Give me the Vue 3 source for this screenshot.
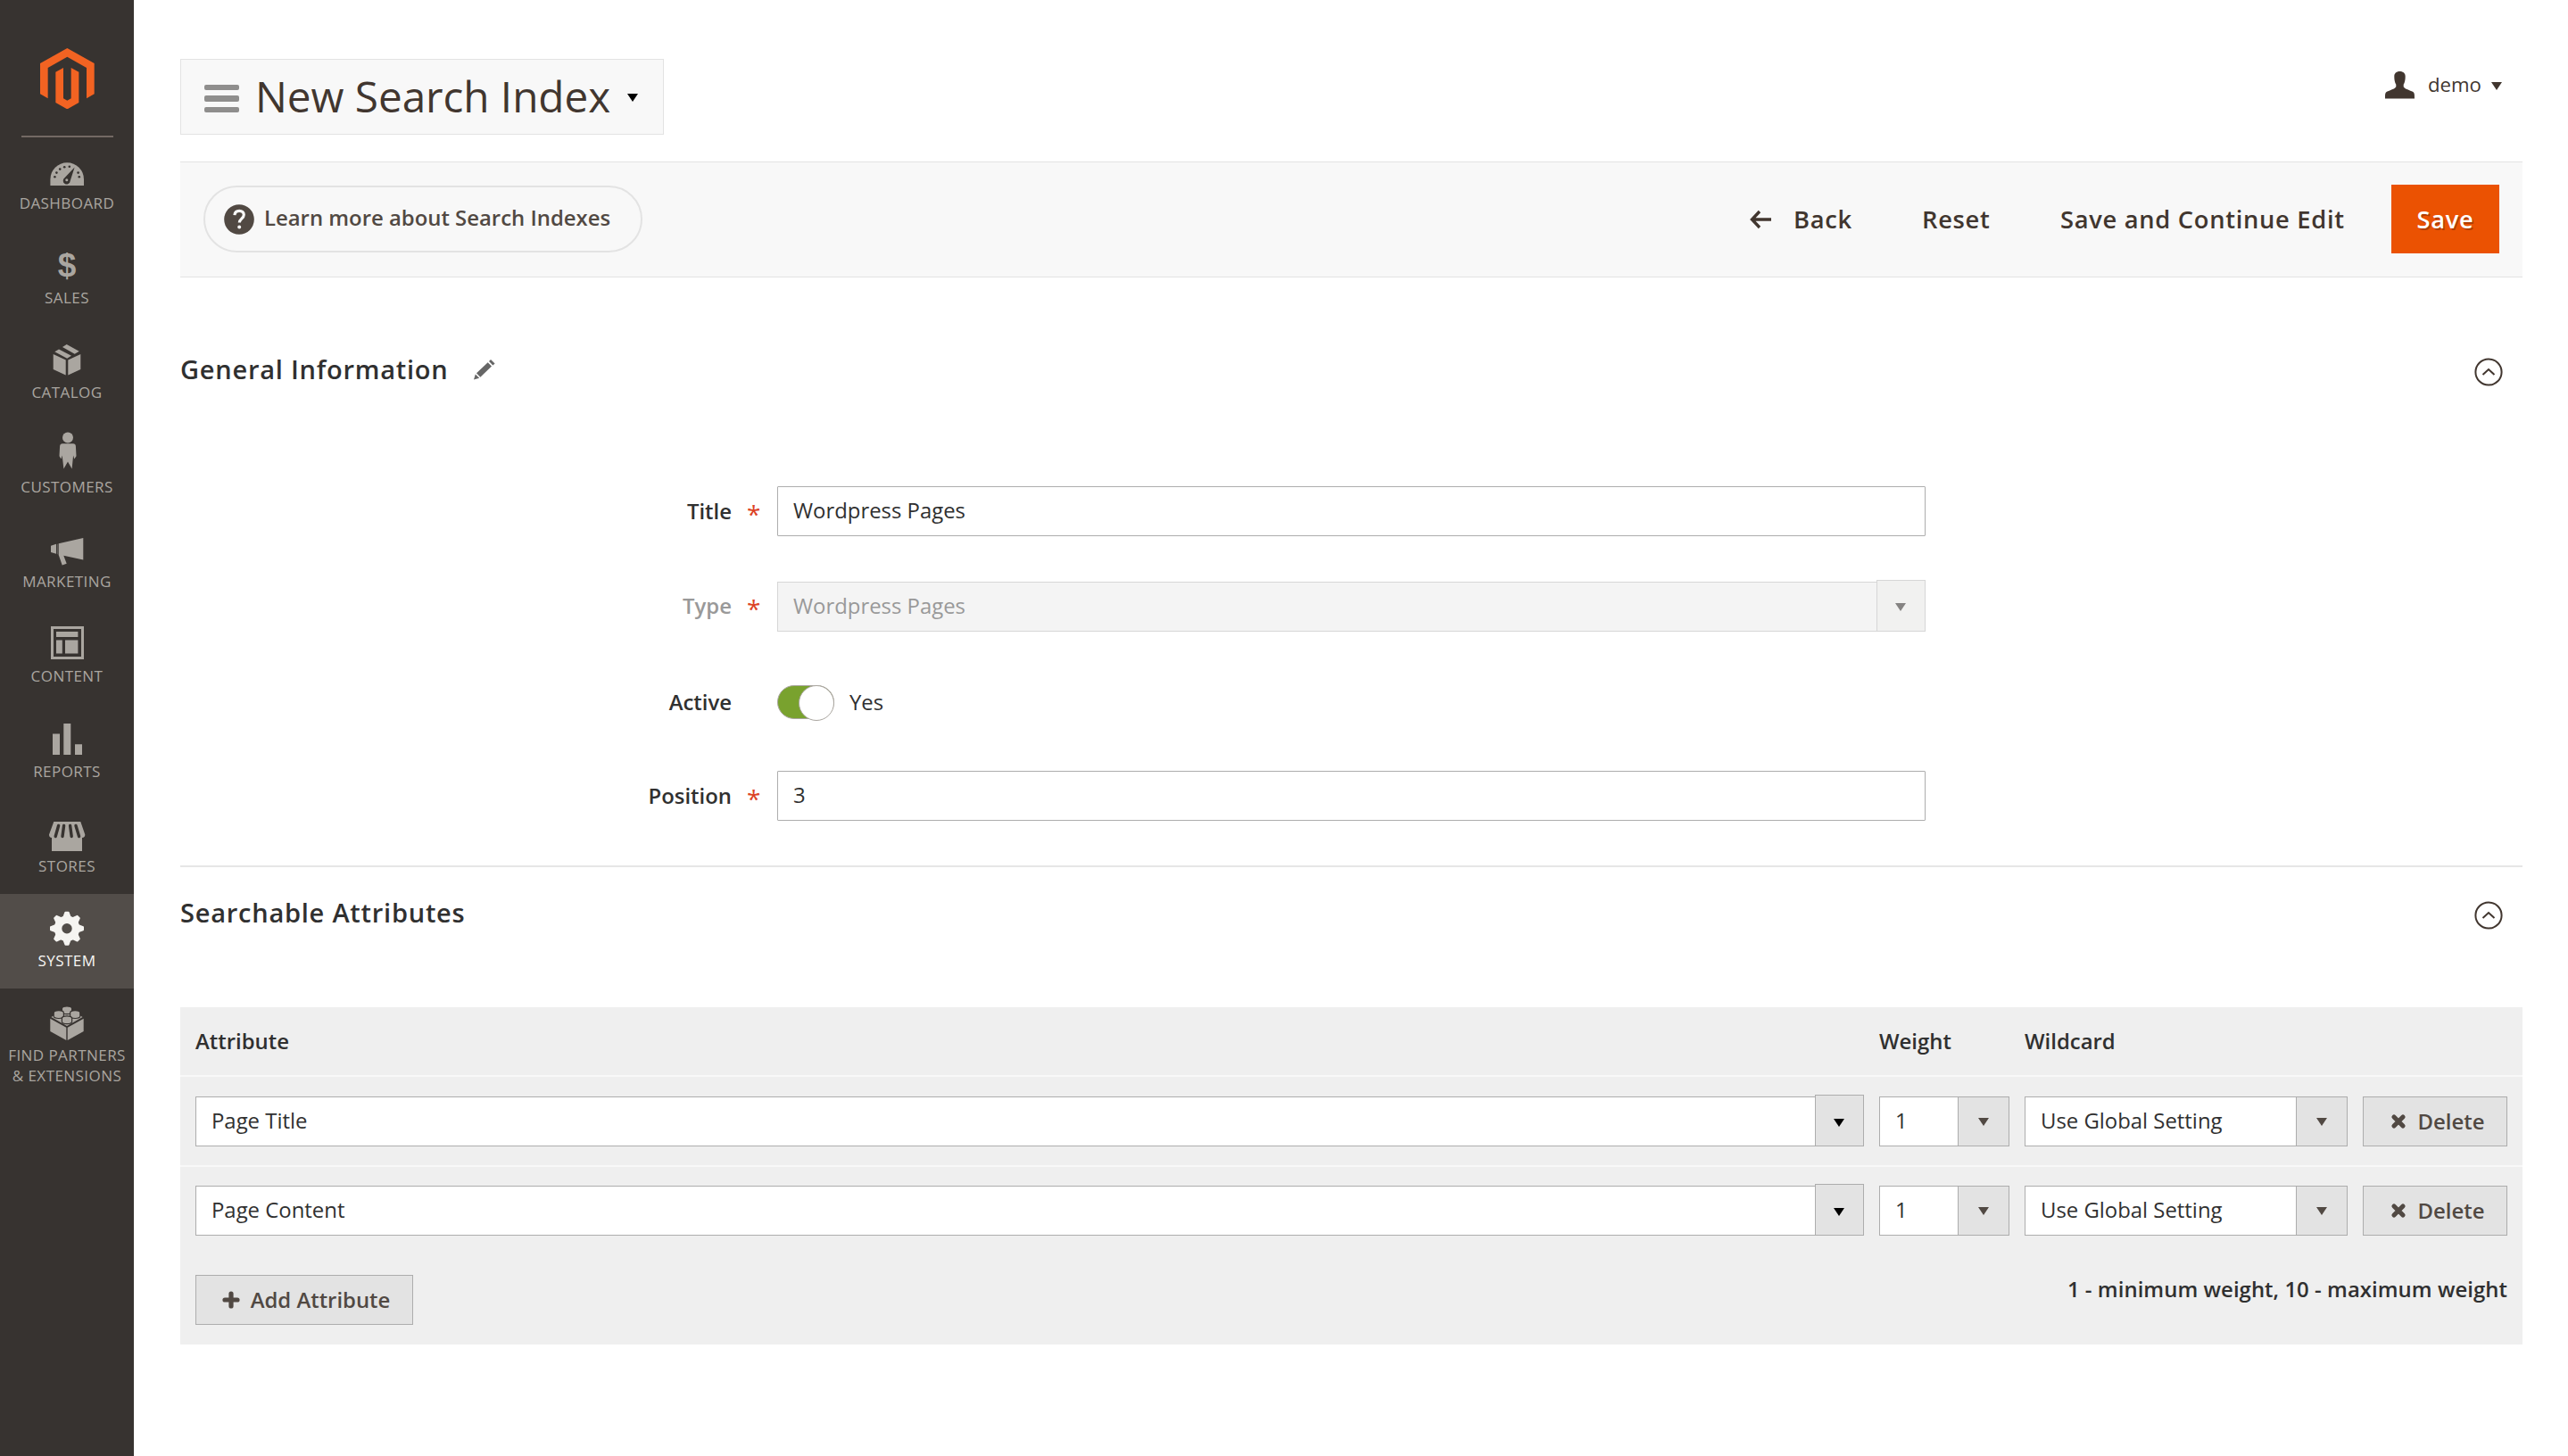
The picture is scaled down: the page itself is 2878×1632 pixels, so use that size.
<template>
  <div class="page">
    <aside class="sidebar">
      <div class="logo">
        <svg viewBox="1.609 0 20.782 24" preserveAspectRatio="none">
          <path d="M12 24l-4.455-2.572v-12l2.97-1.715v12.001l1.485.902 1.485-.902V7.713l2.971 1.715v12L12 24zM22.391 6v12l-2.969 1.714V7.713L12 3.43 4.574 7.713v12.001L1.609 18V6L12 0l10.391 6z" />
        </svg>
      </div>
      <nav class="menu">
        <a v-for="item in menu" :key="item.id" class="menu-item" :class="{ active: item.id === current }">
          <svg class="menu-icon" viewBox="0 0 48 48">
            <template v-if="item.id === 'dashboard'">
              <path d="M5.4 43v-7a18.8 18.8 0 0 1 37.6 0v7z" />
              <g class="cut">
                <circle cx="10.4" cy="33.2" r="1.3" />
                <circle cx="12.4" cy="28.6" r="1.3" />
                <circle cx="16.2" cy="24.6" r="1.3" />
                <circle cx="21.2" cy="22.2" r="1.3" />
                <circle cx="26.8" cy="21.8" r="1.3" />
                <circle cx="36.6" cy="28.6" r="1.3" />
                <circle cx="37.8" cy="33.2" r="1.3" />
                <path d="M32.6 22.6l-4.9 15.2a4 4 0 1 1-6.2-3.6z" />
              </g>
              <circle cx="23.8" cy="36.8" r="1.5" />
            </template>
            <text v-else-if="item.id === 'sales'" class="dollar" x="24" y="38.8">$</text>
            <template v-else-if="item.id === 'catalog'">
              <path d="M8.7 20.1l14 6.5v16.8l-14-6.3zM39.3 20.1l-14 6.5v16.8l14-6.3z" />
              <path d="M10.3 17.2l4.7-2.8 14 7.4-4.8 3zM19 11.9l4.7-2.9 14 7.8-5 2.9z" />
            </template>
            <template v-else-if="item.id === 'customers'">
              <circle cx="25" cy="7.6" r="6" />
              <path d="M19 14.2h12q2.6 0 2.9 2.8l.6 11.2-2.2 3.2-1.2-4-1.5 15.2-4.6-8-4.6 8-1.7-15.2-1.2 4-2-3.2.6-11.2q.3-2.8 2.9-2.8z" />
            </template>
            <template v-else-if="item.id === 'marketing'">
              <path d="M6 22.7l6-1.9v11l-6-1.8zM14.7 20.3l27.6-6.2v24.5l-22-4.8 3.4 8.9-5 1.7-4-11.4z" />
              <path d="M12.9 20.7h.8v11.6h-.8z" opacity=".5" />
            </template>
            <template v-else-if="item.id === 'content'">
              <path d="M6 6.9h37V44H6zM9 9.9V41h31V9.9z" fill-rule="evenodd" />
              <path d="M12 13h24.4v6H12zM12 22.5h6.8v15H12zM22 22.5h14.4v15H22z" />
            </template>
            <path v-else-if="item.id === 'reports'" d="M8 20.6h8V44H8zM20.3 9h8v35h-8zM33 32.3h8V44h-8z" />
            <template v-else-if="item.id === 'stores'">
              <path d="M9.3 13h30l5 14.6q0 3.4-3.3 3.4V46H7V31q-3 0-3-3.4z" />
              <path class="slot" d="M14.6 17.5l-3.4 12M20.6 17.5L19 29.5M27.6 17.5l1.6 12M34 17.5l3.6 12" />
            </template>
            <template v-else-if="item.id === 'system'">
              <circle class="gear-ring" cx="24" cy="26.7" r="10" />
              <path v-for="angle in [0, 45, 90, 135]" :key="angle" class="tooth" d="M22.4 8.7h3.2l2.6 7h-8.400zM22.400 44.700h3.200l2.600-7h-8.400z" :transform="`rotate(${angle} 24 26.7)`" />
            </template>
            <template v-else>
              <path d="M5.3 21.8l18 10v14.2l-18-10zM42.7 21.8l-18 10v14.2l18-10z" />
              <path d="M6.4 20L24 10.2 41.6 20 24 30z" />
              <g class="stud">
                <path d="M18.4 10.6v3.4a5.6 2.7 0 0 0 11.2 0v-3.4a5.6 2.7 0 0 0-11.2 0z" />
                <path d="M9.2 15.4v3.4a5.6 2.7 0 0 0 11.2 0v-3.4a5.6 2.7 0 0 0-11.2 0z" />
                <path d="M27.6 15.4v3.4a5.6 2.7 0 0 0 11.2 0v-3.4a5.6 2.7 0 0 0-11.2 0z" />
                <path d="M18.4 21.6V25a5.6 2.7 0 0 0 11.2 0v-3.4a5.6 2.7 0 0 0-11.2 0z" />
              </g>
            </template>
          </svg>
          <span v-for="line in item.label" :key="line" class="menu-label">{{ line }}</span>
        </a>
      </nav>
    </aside>

    <main class="content">
      <header class="page-header">
        <div class="title-switch">
          <span class="burger"><i></i><i></i><i></i></span>
          <h1>New Search Index</h1>
          <span class="caret black"></span>
        </div>
        <div class="user">
          <svg class="user-icon" viewBox="0 0 33 31">
            <path d="M16.5 0c4 0 6.200 2.200 6.200 5.800 0 4-.6 6.600-2 9v2.400c1 2.400 7.500 4 10.300 5.600 2 1.200 2 3 2 7.600H0c0-4.600 0-6.400 2-7.600 2.800-1.600 9.300-3.200 10.300-5.600v-2.400c-1.400-2.400-2-5-2-9C10.300 2.200 12.500 0 16.500 0z" />
          </svg>
          <span class="user-name">demo</span>
          <span class="caret"></span>
        </div>
      </header>

      <div class="actions-bar">
        <a class="help">
          <svg class="help-icon" viewBox="0 0 34 34">
            <circle cx="17" cy="17" r="16.800" />
            <path d="M11.900 12.200c.3-3.200 2.400-4.900 5.300-4.900 3 0 5.100 1.800 5.100 4.500 0 4.200-5 4.400-5 8.700" />
            <circle class="dot" cx="17.200" cy="25.600" r="2" />
          </svg>
          <span>Learn more about Search Indexes</span>
        </a>
        <div class="actions">
          <a class="action back">
            <svg class="back-icon" viewBox="0 0 25 22"><path d="M11 2L2.500 11l8.500 9M3 11h21" /></svg>
            <span>Back</span>
          </a>
          <a class="action reset">Reset</a>
          <a class="action continue">Save and Continue Edit</a>
          <button class="save">Save</button>
        </div>
      </div>

      <section class="general">
        <div class="section-head">
          <h2>General Information</h2>
          <svg class="pencil" viewBox="0 0 24 23">
            <path d="M0 22.500l1.800-6 4.400 4.300zM3 15.200L15.700 3.200l4.300 4.300L7.300 19.700zM17 2l2-2 4.600 4.400-2.200 2z" />
          </svg>
          <svg class="toggle-arrow" viewBox="0 0 32 32"><circle cx="16" cy="16" r="14.600" /><path d="M9.500 19l6.500-6 6.500 6" /></svg>
        </div>

        <div class="field">
          <label class="required">Title</label>
          <div class="input">Wordpress Pages</div>
        </div>
        <div class="field type">
          <label class="required">Type</label>
          <div class="select tall disabled">
            <span class="value">Wordpress Pages</span>
            <span class="arrow"><span class="caret"></span></span>
          </div>
        </div>
        <div class="field active-field">
          <label>Active</label>
          <span class="switch"></span>
          <span class="switch-text">Yes</span>
        </div>
        <div class="field">
          <label class="required">Position</label>
          <div class="input">3</div>
        </div>
      </section>

      <section class="attributes">
        <div class="section-head">
          <h2>Searchable Attributes</h2>
          <svg class="toggle-arrow" viewBox="0 0 32 32"><circle cx="16" cy="16" r="14.600" /><path d="M9.500 19l6.500-6 6.500 6" /></svg>
        </div>

        <div class="table">
          <div class="row head">
            <span>Attribute</span>
            <span>Weight</span>
            <span>Wildcard</span>
          </div>
          <div v-for="row in rows" :key="row.attribute" class="row">
            <div class="select tall">
              <span class="value">{{ row.attribute }}</span>
              <span class="arrow"><span class="caret black"></span></span>
            </div>
            <div class="select">
              <span class="value">{{ row.weight }}</span>
              <span class="arrow"><span class="caret"></span></span>
            </div>
            <div class="select">
              <span class="value">{{ row.wildcard }}</span>
              <span class="arrow"><span class="caret"></span></span>
            </div>
            <button class="btn delete">
              <svg viewBox="0 0 18 18"><path d="M4 4l10 10M14 4L4 14" /></svg>
              <span>Delete</span>
            </button>
          </div>
          <div class="table-foot">
            <button class="btn add">
              <svg viewBox="0 0 20 20"><path d="M10 3v14M3 10h14" /></svg>
              <span>Add Attribute</span>
            </button>
            <p>1 - minimum weight, 10 - maximum weight</p>
          </div>
        </div>
      </section>
    </main>
  </div>
</template>

<script setup>
import { ref } from 'vue'

const current = ref('system')

const menu = [
  { id: 'dashboard', label: ['DASHBOARD'] },
  { id: 'sales', label: ['SALES'] },
  { id: 'catalog', label: ['CATALOG'] },
  { id: 'customers', label: ['CUSTOMERS'] },
  { id: 'marketing', label: ['MARKETING'] },
  { id: 'content', label: ['CONTENT'] },
  { id: 'reports', label: ['REPORTS'] },
  { id: 'stores', label: ['STORES'] },
  { id: 'system', label: ['SYSTEM'] },
  { id: 'partners', label: ['FIND PARTNERS', '& EXTENSIONS'] }
]

const rows = ref([
  { attribute: 'Page Title', weight: 1, wildcard: 'Use Global Setting' },
  { attribute: 'Page Content', weight: 1, wildcard: 'Use Global Setting' }
])
</script>

<style>
body {
  background: #fff;
}
</style>

<style scoped>
.page {
  display: flex;
  width: 2878px;
  height: 1632px;
  overflow: hidden;
  font-family: 'Open Sans', 'Noto Sans', sans-serif;
  font-size: 23.9px;
  color: #303030;
}
.page * {
  box-sizing: border-box;
}
h1, h2, p {
  margin: 0;
}
button {
  font-family: inherit;
  padding: 0;
}

/* sidebar */
.sidebar {
  width: 150px;
  flex: none;
  background: #373330;
}
.logo {
  height: 154px;
  margin: 0 23px 0 24px;
  padding: 54px 0 0 21.3px;
  border-bottom: 2px solid #736963;
}
.logo svg {
  display: block;
  width: 60.7px;
  height: 68.4px;
  fill: #f26322;
}
.menu {
  margin-top: -1px;
}
.menu-item {
  display: flex;
  flex-direction: column;
  align-items: center;
  height: 106.1px;
  padding-top: 12px;
  fill: #aaa6a0;
}
.menu-item.active {
  background: #524d49;
  fill: #f5f4f1;
}
.menu-icon {
  width: 48px;
  height: 48px;
  margin-bottom: 3px;
  flex: none;
}
.menu-label {
  font-size: 17.05px;
  line-height: 23px;
  letter-spacing: 0.42px;
  white-space: nowrap;
  color: #aaa6a0;
}
.active .menu-label {
  color: #f7f5f3;
  font-weight: 500;
}
.cut {
  fill: #373330;
}
.dollar {
  font: bold 37px 'Liberation Sans', Arial, sans-serif;
  text-anchor: middle;
}
.slot {
  stroke: #373330;
  stroke-width: 3.4;
  stroke-linecap: round;
}
.gear-ring {
  fill: none;
  stroke: #f5f4f1;
  stroke-width: 8.6;
}
.tooth {
  stroke: #f5f4f1;
  stroke-width: 2;
  stroke-linejoin: round;
}
.stud {
  stroke: #373330;
  stroke-width: 1.2;
}

/* header */
.content {
  width: 2625px;
  margin-left: 52px;
  padding-top: 66px;
}
.page-header {
  display: flex;
  justify-content: space-between;
  height: 115px;
}
.title-switch {
  display: flex;
  align-items: center;
  width: 542px;
  height: 85px;
  padding-left: 26px;
  background: #f8f8f8;
  border: 1px solid #e3e3e3;
}
.burger {
  display: flex;
  flex-direction: column;
  gap: 6px;
  width: 39px;
  margin: 4px 18px 0 0;
}
.burger i {
  height: 6.6px;
  border-radius: 2px;
  background: #8f8e8d;
}
h1 {
  width: 414px;
  margin-bottom: 1px;
  font-size: 47.7px;
  font-weight: 400;
  line-height: 64px;
  letter-spacing: -0.05px;
  white-space: nowrap;
  color: #41362f;
}
.caret {
  width: 0;
  height: 0;
  border: 6.5px solid transparent;
  border-top: 9px solid #514943;
  border-bottom: 0;
}
.caret.black {
  border-top-color: #000;
}
.title-switch .caret {
  margin: 2px 0 0 3px;
}
.user {
  display: flex;
  align-items: center;
  height: 58px;
  padding-right: 23px;
  color: #41362f;
}
.user-icon {
  width: 33px;
  height: 31px;
  margin-right: 15px;
  fill: #41362f;
}
.user-name {
  width: 59px;
  margin-right: 12px;
  margin-bottom: 1px;
  font-size: 22.2px;
}
.user .caret {
  margin-top: 3px;
  border-top-color: #41362f;
}

/* buttons bar */
.actions-bar {
  display: flex;
  justify-content: space-between;
  align-items: center;
  height: 130px;
  padding: 0 26px;
  background: #f8f8f8;
  border-top: 1px solid #e3e3e3;
  border-bottom: 1px solid #e3e3e3;
}
.help {
  display: flex;
  align-items: center;
  width: 492px;
  height: 75px;
  margin-top: -1px;
  padding-left: 21px;
  border: 2.4px solid #e3e3e3;
  border-radius: 38px;
  font-weight: 600;
  color: #514943;
  white-space: nowrap;
}
.help span {
  margin-bottom: 5px;
}
.help-icon {
  width: 34px;
  height: 34px;
  margin-right: 11px;
  fill: #514943;
}
.help-icon path {
  fill: none;
  stroke: #f8f8f8;
  stroke-width: 3.2;
}
.help-icon .dot {
  fill: #f8f8f8;
}
.actions {
  display: flex;
  align-items: center;
  font-size: 27.3px;
  font-weight: 600;
  letter-spacing: 0.7px;
  color: #41362f;
  white-space: nowrap;
}
.action {
  display: flex;
  align-items: center;
  margin-bottom: 2px;
}
.back {
  width: 193px;
}
.back-icon {
  width: 25px;
  height: 22px;
  margin: 1px 24px 0 0;
  fill: none;
  stroke: #41362f;
  stroke-width: 3.4;
}
.reset {
  width: 155px;
}
.continue {
  width: 371px;
}
.save {
  width: 121px;
  height: 77px;
  margin-bottom: 1px;
  padding-bottom: 1px;
  border: 1px solid #eb5202;
  background: #eb5202;
  color: #fff;
  font-size: 27.3px;
  font-weight: 600;
  letter-spacing: 0.68px;
  text-shadow: 1.5px 1.5px 0 rgba(0, 0, 0, 0.25);
}

/* sections */
.section-head {
  display: flex;
  align-items: center;
  height: 40px;
}
h2 {
  font-size: 29px;
  font-weight: 600;
  line-height: 40px;
  letter-spacing: 0.76px;
}
.pencil {
  width: 24px;
  height: 23px;
  margin: 1px 0 0 29px;
  fill: #666;
}
.toggle-arrow {
  width: 32px;
  height: 32px;
  margin: 5px 22.5px 0 auto;
  fill: none;
  stroke: #41362f;
  stroke-width: 2;
}
.general {
  height: 661px;
  padding-top: 83px;
  border-bottom: 2px solid #e6e6e6;
}
.general .section-head {
  margin-bottom: 111px;
}
.field {
  display: flex;
  align-items: center;
  height: 56px;
}
.field label {
  width: 669px;
  padding: 0 51px 2px 0;
  text-align: right;
  font-weight: 600;
}
.field label.required {
  padding: 0 0 1px;
}
.required::after {
  content: '*';
  display: inline-block;
  width: 12px;
  margin: 0 22px 0 17px;
  font-size: 28px;
  font-weight: 500;
  line-height: 24px;
  vertical-align: -5px;
  color: #dc4326;
}
.input {
  width: 1287px;
  height: 56px;
  padding-left: 17px;
  border: 1px solid #adadad;
  border-radius: 1px;
  line-height: 52px;
  background: #fff;
}
.field.type {
  height: 57px;
  margin-top: 49px;
}
.field.type label {
  color: #999;
}
.type .select {
  width: 1287px;
}
.active-field {
  margin: 52px 0 49px;
}
.switch {
  display: flex;
  justify-content: flex-end;
  width: 64px;
  height: 38px;
  border: 1px solid #aaa6a0;
  border-radius: 19px;
  background: #79a22e;
}
.switch::after {
  content: '';
  width: 38px;
  height: 38px;
  margin: -1px -1px 0 0;
  border: 1px solid #aaa6a0;
  border-radius: 50%;
  background: #fff;
}
.switch-text {
  margin: 0 0 1px 17px;
}

.select {
  display: flex;
  align-items: flex-end;
  height: 56px;
}
.select .value {
  flex: 1;
  height: 56px;
  padding-left: 17px;
  border: 1px solid #adadad;
  border-right: 0;
  line-height: 52px;
  white-space: nowrap;
  background: #fff;
}
.select .arrow {
  display: flex;
  align-items: center;
  justify-content: center;
  width: 58px;
  height: 56px;
  border: 1px solid #adadad;
  background: #e3e3e3;
}
.select.tall {
  height: 58px;
}
.select.tall .arrow {
  width: 55px;
  height: 58px;
  padding: 4px 1px 0 0;
}
.select.disabled .value {
  border-color: #d6d6d6;
  background: #f4f4f4;
  color: #999;
}
.select.disabled .arrow {
  border-color: #d6d6d6;
  background: #f1f1f0;
}
.select.disabled .caret {
  border-top-color: #858382;
}

/* attributes table */
.attributes {
  padding-top: 31px;
}
.attributes .section-head {
  margin-bottom: 86px;
}
.table {
  height: 378px;
  background: #efefef;
}
.row {
  display: grid;
  grid-template-columns: 1870px 146px 362px 162px;
  column-gap: 17px;
  align-items: end;
  height: 101px;
  padding: 0 0 21px 17px;
  border-bottom: 2px solid #f8f8f8;
}
.row.head {
  height: 78px;
  padding-bottom: 22px;
  font-weight: 600;
}
.row:nth-child(3) {
  height: 99px;
  padding-bottom: 22px;
  border-bottom: 0;
}
.btn {
  display: flex;
  align-items: center;
  justify-content: center;
  height: 56px;
  border: 1px solid #adadad;
  background: #e3e3e3;
  color: #514943;
  font-size: 23.9px;
  font-weight: 600;
  white-space: nowrap;
}
.btn span {
  margin-bottom: 2px;
}
.btn svg {
  fill: none;
  stroke: #514943;
  stroke-width: 5.2;
  stroke-linecap: round;
}
.delete {
  padding-left: 5px;
}
.delete svg {
  width: 18px;
  height: 18px;
  margin-right: 13px;
}
.add {
  width: 244px;
  padding-left: 4px;
}
.add svg {
  width: 20px;
  height: 20px;
  margin-right: 12px;
}
.table-foot {
  display: flex;
  justify-content: space-between;
  padding: 22px 17px 0;
  font-weight: 600;
}
.table-foot p {
  line-height: 32px;
  letter-spacing: 0.05px;
}
</style>
